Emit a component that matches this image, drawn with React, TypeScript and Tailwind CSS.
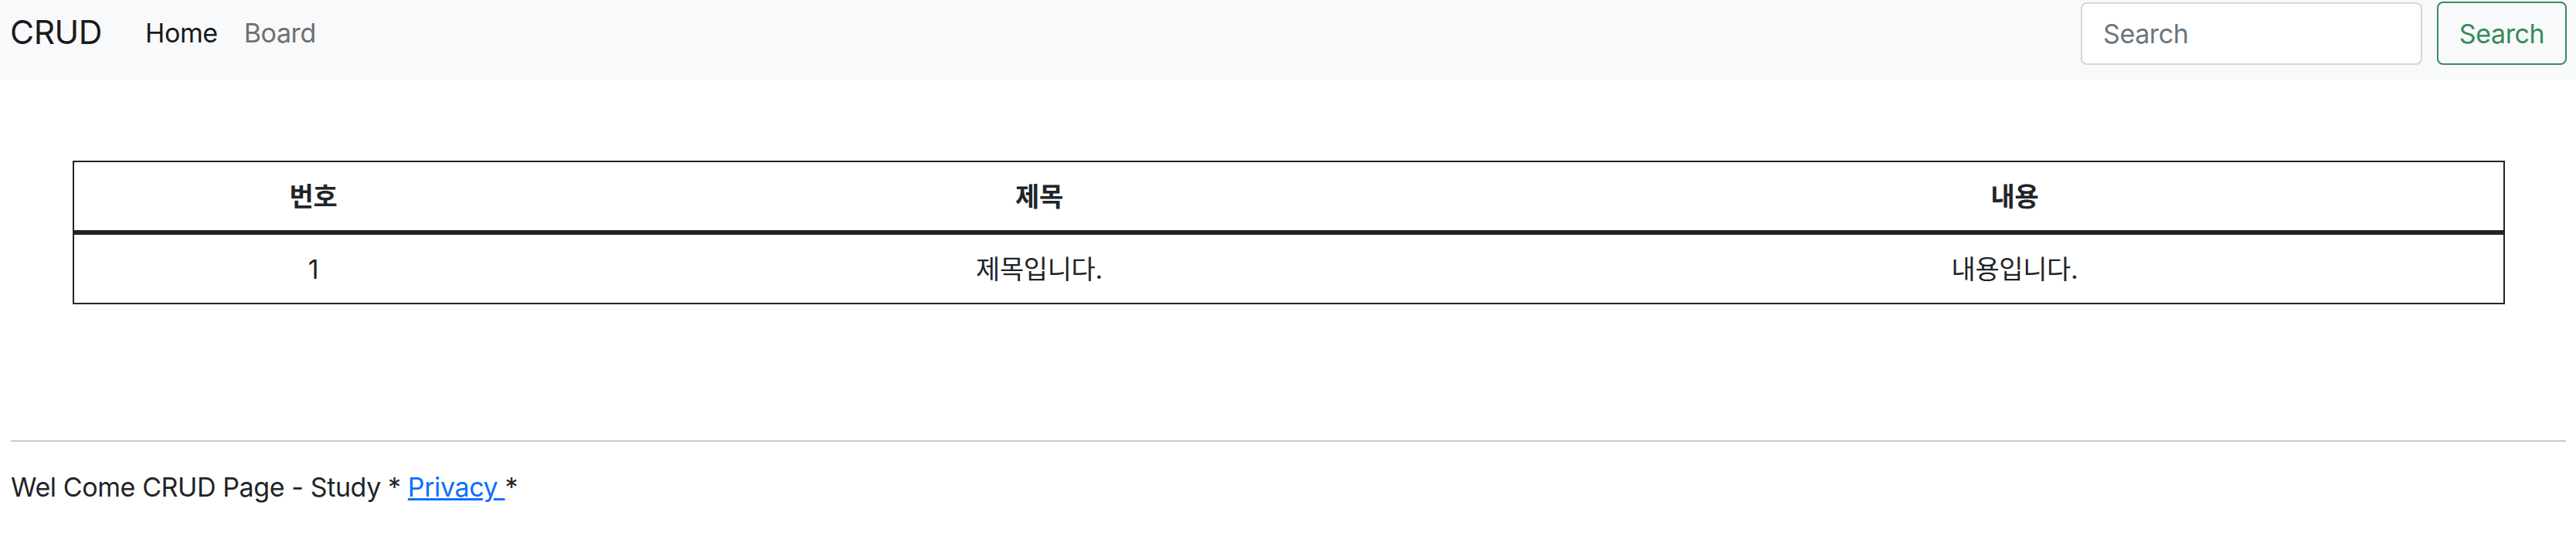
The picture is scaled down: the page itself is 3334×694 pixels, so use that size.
import React from 'react';

const rows = [{ id: 1, title: '제목입니다.', content: '내용입니다.' }];

const font = { fontFamily: 'Inter, "Noto Sans CJK KR", sans-serif' };

export default function App() {
  return (
    <div className="min-h-screen bg-white text-[#212529] tracking-[-0.4px]" style={font}>
      {/* Navbar */}
      <nav className="h-[103px] bg-[#f8f9fa] flex items-start pt-[2px] pl-[13px] pr-[12px]">
        <div className="flex items-center h-[81px] flex-1">
          <a className="text-[42.5px] leading-none text-[#1a1a1a] mr-[39px]">CRUD</a>
          <ul className="flex items-center">
            <li>
              <a className="block px-[17px] text-[34px] leading-none text-[#1a1a1a]">Home</a>
            </li>
            <li>
              <a className="block px-[17px] text-[34px] leading-none text-[#6f7071]">Board</a>
            </li>
          </ul>
        </div>
        <form className="flex items-center gap-[19px]" onSubmit={(e) => e.preventDefault()}>
          <input
            type="search"
            placeholder="Search"
            className="w-[442px] h-[81px] bg-white border-2 border-[#d3d7db] rounded-[8px] px-[27px] text-[34px] tracking-[-0.4px] placeholder:text-[#6c757d] outline-none"
          />
          <button className="w-[168px] h-[82px] border-2 border-[#3a8a5a] rounded-[8px] text-[34px] text-[#3a8a5a]">
            Search
          </button>
        </form>
      </nav>

      {/* Board table */}
      <div className="ml-[94px] mr-[92px] mt-[105px]">
        <table className="w-full border-collapse border-2 border-[#212529] text-[34px]">
          <thead>
            <tr className="border-b-[6px] border-[#212529]">
              <th className="w-[620px] h-[92px] font-bold text-center">번호</th>
              <th className="w-[1260px] h-[92px] font-bold text-center">제목</th>
              <th className="h-[92px] font-bold text-center">내용</th>
            </tr>
          </thead>
          <tbody>
            {rows.map((r) => (
              <tr key={r.id}>
                <td className="h-[92px] text-center">{r.id}</td>
                <td className="h-[92px] text-center">{r.title}</td>
                <td className="h-[92px] text-center">{r.content}</td>
              </tr>
            ))}
          </tbody>
        </table>
      </div>

      {/* Footer */}
      <footer className="mt-[176px] px-[14px]">
        <hr className="border-t-2 border-[#c9c9ca] mr-[-1px]" />
        <p className="mt-[33px] text-[34px] leading-[51px]">
          Wel Come CRUD Page - Study *{' '}
          <a className="text-[#0d6efd] underline">Privacy </a>*
        </p>
      </footer>
    </div>
  );
}
